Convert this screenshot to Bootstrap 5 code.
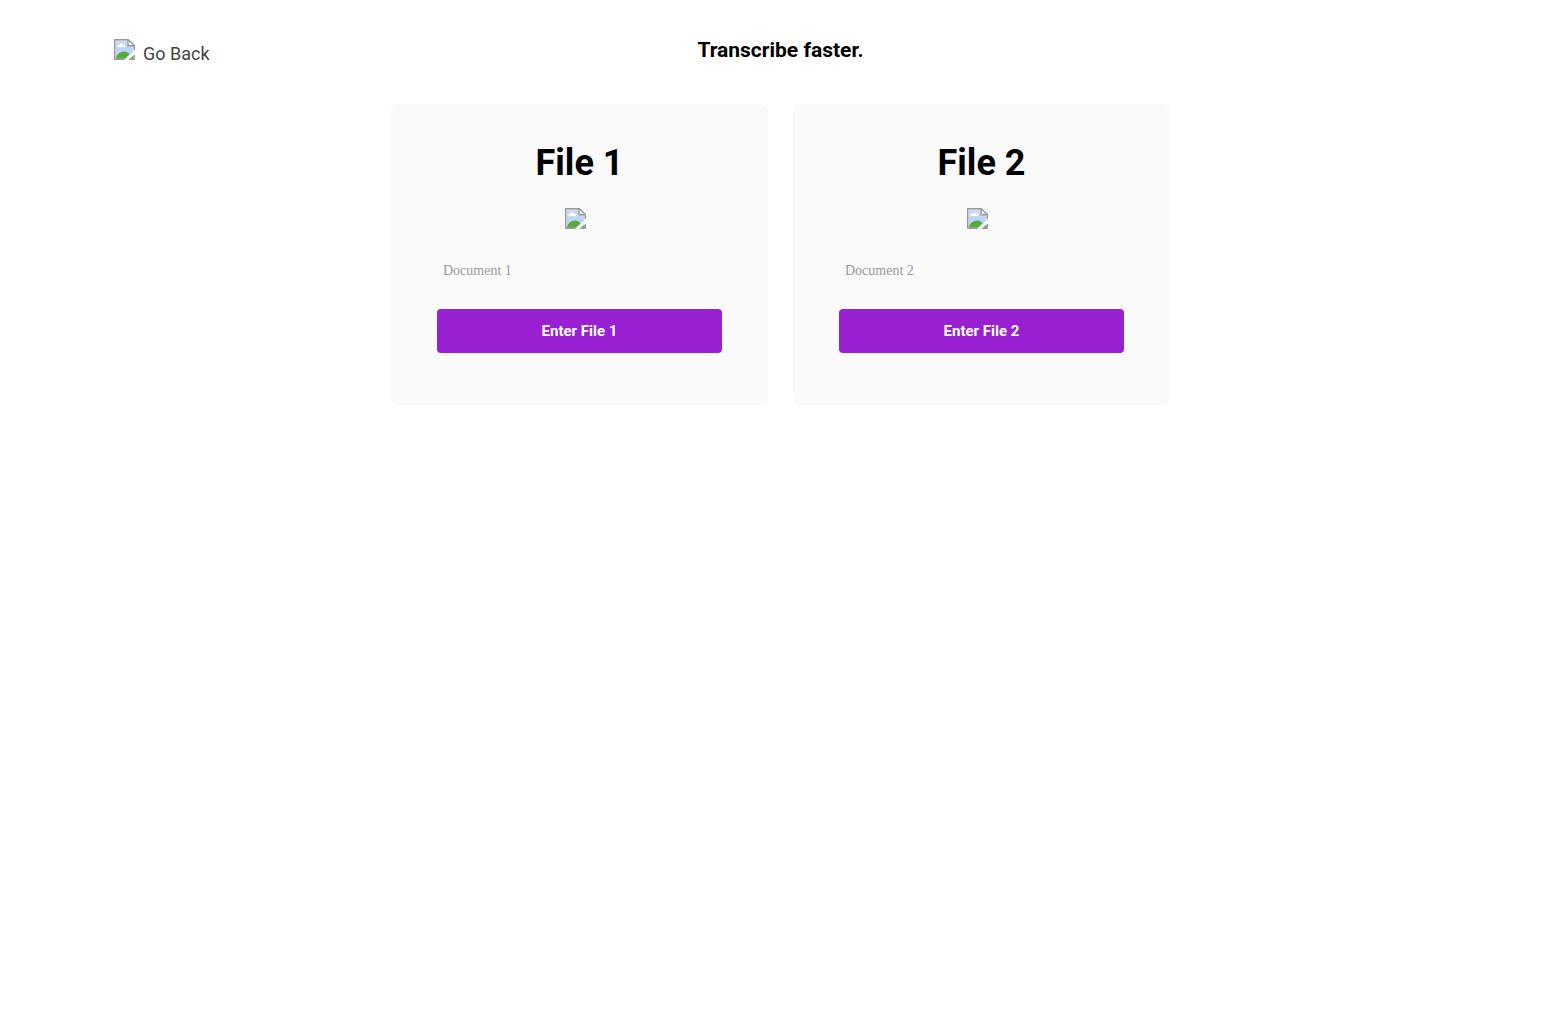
<!DOCTYPE html>
<html lang="en">
<head>
<meta charset="utf-8">
<meta name="viewport" content="width=device-width, initial-scale=1">
<title>Transcribe faster.</title>
<link href="https://cdn.jsdelivr.net/npm/bootstrap@5.3.0/dist/css/bootstrap.min.css" rel="stylesheet">
<style>
  body { font-family: Roboto, "Liberation Sans", sans-serif; color: #000; background: #fff; }
  .top-bar { padding: 36px 114px 35px; }
  .go-back { color: #444; font-size: 18px; line-height: 30px; gap: 8px; padding-top: 3px; }
  .go-back:hover { color: #000; }
  .tagline { font-size: 21px; line-height: 28px; font-weight: 700; }
  .file-list { max-width: 779px; gap: 25px; }
  .file-card { background: #fafafa; border-radius: 8px; padding: 36px 46px 52px; }
  .file-title { font-size: 36px; line-height: 46px; font-weight: 700; }
  .file-picture { margin: 22px 8px 24px 0; }
  .file-name { font-family: "Liberation Serif", serif; font-size: 14px; line-height: 20px; padding: 8px 6px; background: transparent; color: #333; }
  .file-name:focus { background: transparent; }
  .file-name::placeholder { color: #999; }
  .btn-enter { --bs-btn-color: #fff; --bs-btn-bg: #9820d2; --bs-btn-hover-color: #fff; --bs-btn-hover-bg: #8319b8; --bs-btn-active-color: #fff; --bs-btn-active-bg: #70149e; --bs-btn-border-radius: 4px; --bs-btn-font-size: 15px; --bs-btn-font-weight: 700; --bs-btn-line-height: 20px; --bs-btn-padding-y: 12px; margin-top: 20px; }
</style>
</head>
<body>
<svg class="d-none" aria-hidden="true">
  <symbol id="missing-picture" viewBox="0 0 21 21">
    <path d="M1 1h13.500l5.500 5.500V20H1z" fill="#e6eefb"/>
    <path d="M2 2h12v5h5v12.500H2z" fill="#cbdaf7"/>
    <path d="M2 9h17v10.500H2z" fill="#c0d2f5"/>
    <path d="M3.500 8c0-1.300.8-1.900 1.900-1.900.4-1.900 3-2.200 3.700-.4 1.300 0 2 .8 2 2.300z" fill="#fff"/>
    <path d="M1.800 19.800c1-4.300 4.200-7.300 8.200-7.300 2.500 0 4.400 1.200 5.600 2.700l-4.600 4.600zM15 19.800l4.500-3.300v3.300z" fill="#57aa3c"/>
    <path d="M14 1v6h6z" fill="#fff"/>
    <path d="M.7 20.500V.7H14.400l5.900 5.900V11M14 1v5.800h6M.5 20.300h20M20.300 16v4.500" fill="none" stroke="#999" stroke-width="1.400"/>
    <path d="M10 21L21 11v4.300L14.300 21z" fill="#fafafa"/>
  </symbol>
</svg>
<header class="top-bar container-fluid">
  <div class="row gx-0 align-items-start">
    <div class="col"><a href="#" class="go-back d-inline-flex align-items-start text-decoration-none"><svg width="21" height="21" aria-hidden="true"><use href="#missing-picture"/></svg><span>Go Back</span></a></div>
    <div class="col-auto"><h1 class="tagline mb-0">Transcribe faster.</h1></div>
    <div class="col"></div>
  </div>
</header>
<main class="file-list mx-auto d-flex flex-column flex-md-row">
  <section class="file-card flex-fill text-center">
    <h2 class="file-title mb-0">File 1</h2>
    <svg class="file-picture d-inline-block align-top" width="21" height="21" aria-hidden="true"><use href="#missing-picture"/></svg>
    <input type="text" class="file-name form-control border-0 shadow-none" placeholder="Document 1" aria-label="Document 1">
    <button type="button" class="btn btn-enter border-0 w-100">Enter File 1</button>
  </section>
  <section class="file-card flex-fill text-center">
    <h2 class="file-title mb-0">File 2</h2>
    <svg class="file-picture d-inline-block align-top" width="21" height="21" aria-hidden="true"><use href="#missing-picture"/></svg>
    <input type="text" class="file-name form-control border-0 shadow-none" placeholder="Document 2" aria-label="Document 2">
    <button type="button" class="btn btn-enter border-0 w-100">Enter File 2</button>
  </section>
</main>
<script src="https://cdn.jsdelivr.net/npm/bootstrap@5.3.0/dist/js/bootstrap.bundle.min.js"></script>
</body>
</html>
